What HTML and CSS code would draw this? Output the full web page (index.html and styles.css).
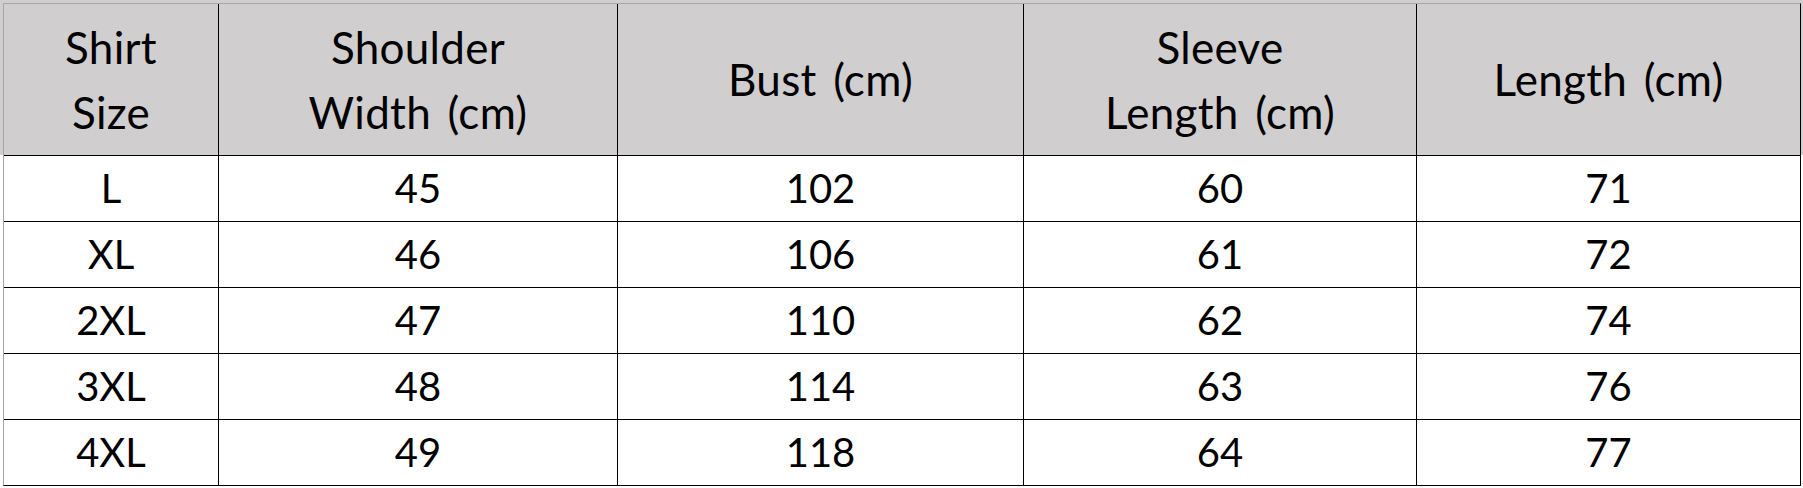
FILE: index.html
```html
<!DOCTYPE html>
<html>
<head>
<meta charset="utf-8">
<link rel="stylesheet" href="styles.css">
</head>
<body>
<div class="sheet">
  <div class="grid">
    <div class="cell head">Shirt<br>Size</div>
    <div class="cell head">Shoulder<br>Width (cm)</div>
    <div class="cell head">Bust (cm)</div>
    <div class="cell head">Sleeve<br>Length (cm)</div>
    <div class="cell head">Length (cm)</div>

    <div class="cell">L</div><div class="cell">45</div><div class="cell">102</div><div class="cell">60</div><div class="cell">71</div>
    <div class="cell">XL</div><div class="cell">46</div><div class="cell">106</div><div class="cell">61</div><div class="cell">72</div>
    <div class="cell">2XL</div><div class="cell">47</div><div class="cell">110</div><div class="cell">62</div><div class="cell">74</div>
    <div class="cell">3XL</div><div class="cell">48</div><div class="cell">114</div><div class="cell">63</div><div class="cell">76</div>
    <div class="cell">4XL</div><div class="cell">49</div><div class="cell">118</div><div class="cell">64</div><div class="cell">77</div>
  </div>
</div>
</body>
</html>
```
FILE: styles.css
```css
html, body {
  margin: 0;
  padding: 0;
  background: #fff;
}
.sheet {
  width: 1803px;
  height: 488px;
  box-sizing: border-box;
  padding: 3px 0 0 3px;
  background: linear-gradient(to bottom, #d0cece 0, #d0cece 155px, #fff 155px);
}
.grid {
  display: grid;
  grid-template-columns: 214px 398px 405px 392px 383px;
  grid-template-rows: 151px repeat(5, 65px);
  gap: 1px;
  width: max-content;
  background: #000;
  border-top: 1px solid #a6a6a6;
  border-left: 1px solid #a6a6a6;
  border-right: 1px solid #000;
  border-bottom: 1px solid #000;
}
.cell {
  display: flex;
  align-items: center;
  justify-content: center;
  text-align: center;
  background: #fff;
  color: #000;
  font-family: Lato, "Open Sans", sans-serif;
  font-size: 40px;
  line-height: 65px;
}
.head {
  background: #d0cece;
  font-size: 44px;
  letter-spacing: 0.3px;
  word-spacing: 5px;
}
```
